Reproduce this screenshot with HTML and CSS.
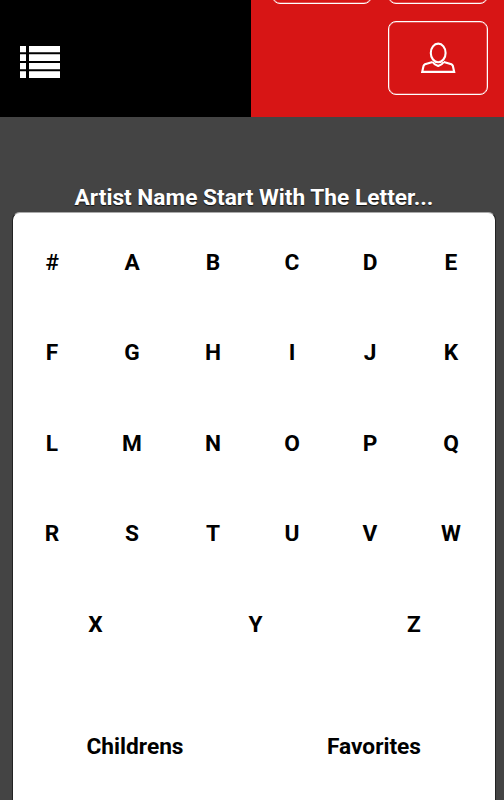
FILE: index.html
```
<!doctype html>
<html lang="en">
<head>
    <title>Artists</title>
    <meta charset="utf-8">
    <meta name="viewport" content="width=device-width, initial-scale=1.0">
    <link rel="stylesheet" href="styles.css">
</head>
<body>
    <header class="header">
        <div class="menu">
            <svg width="40" height="32" viewBox="0 0 40 32" fill="#fff">
                <path d="M0 0h6v6.2H0zM9 0h31v6.2H9zM0 8.2h6v6.8H0zM9 8.2h31v6.8H9zM0 17h6v6.2H0zM9 17h31v6.2H9zM0 25.2h6v6.8H0zM9 25.2h31v6.8H9z"/>
            </svg>
        </div>
        <div class="buttons">
            <div class="btn"></div>
            <div class="btn"></div>
            <div class="btn user">
                <svg width="36" height="32" viewBox="0 0 36 32" fill="none" stroke="#fff" stroke-width="2.1">
                    <ellipse cx="18.2" cy="10.900" rx="7.4" ry="9.3"/>
                    <path d="M12.6 20L5 22.3Q4 22.800 3.500 24L2.200 29.900H34.200L32.900 24Q32.400 22.800 31.400 22.300L23.800 20M12.600 20Q14 22.400 18.200 24Q22.400 22.400 23.800 20"/>
                </svg>
            </div>
        </div>
    </header>

    <h1 class="title">Artist Name Start With The Letter...</h1>

    <div class="panel">
        <div class="letters">
            <a class="hash">#</a><a>A</a><a>B</a><a>C</a><a>D</a><a>E</a>
            <a>F</a><a>G</a><a>H</a><a>I</a><a>J</a><a>K</a>
            <a>L</a><a>M</a><a>N</a><a>O</a><a>P</a><a>Q</a>
            <a>R</a><a>S</a><a>T</a><a>U</a><a>V</a><a>W</a>
        </div>
        <div class="last-letters">
            <a>X</a><a>Y</a><a>Z</a>
        </div>
        <div class="lists">
            <a>Childrens</a><a>Favorites</a>
        </div>
    </div>
</body>
</html>
```

FILE: styles.css
```
*
{
    box-sizing: border-box;
}
body
{
    margin: 0;
    height: 800px;
    overflow: hidden;
    background-color: #444;
    color: #000;
    font-family: Roboto, sans-serif;
    font-size: 22.7px;
    font-weight: 700;
}
.header
{
    display: flex;
    height: 117px;
    overflow: hidden;
    background-color: #000;
}
.menu
{
    width: 251px;
    padding: 46px 0 0 20px;
}
.menu svg,
.user svg
{
    display: block;
}
/* the first row of buttons is cut off by the top of the page */
.buttons
{
    display: flex;
    flex-wrap: wrap;
    justify-content: flex-end;
    align-content: flex-end;
    gap: 17px 16px;
    width: 253px;
    padding: 0 16px 22px 0;
    background-color: #d71515;
}
.btn
{
    width: 100px;
    height: 74px;
    border: 1px solid #fff;
    border-radius: 8px;
    box-shadow: inset 0 0 0 0.5px rgba(255, 255, 255, 0.5);
}
.user
{
    display: flex;
    justify-content: center;
    padding-top: 20px;
}
.title
{
    margin: 67px 0 0;
    padding-left: 4px;
    height: 28px;
    font-size: 22.7px;
    line-height: 28px;
    text-align: center;
    white-space: nowrap;
    color: #fff;
    text-shadow: 0 1px 1px #111;
}
.panel
{
    margin: 0 8px 0 12px;
    height: 620px;
    padding-top: 4px;
    border: 1px solid #222;
    border-top-color: #aaa;
    border-radius: 8px;
    background-color: #fff;
}
.letters
{
    display: grid;
    grid-template-columns: 78px 82px 80px 78px 78px 84px;
    grid-auto-rows: 90.5px;
}
.last-letters
{
    display: grid;
    grid-template-columns: 165px 155px 162px;
    height: 91px;
}
.lists
{
    display: grid;
    grid-template-columns: 244px 234px;
    height: 153px;
}
.panel a
{
    display: flex;
    align-items: center;
    justify-content: center;
}
.panel .hash
{
    font-weight: 500;
}
```
